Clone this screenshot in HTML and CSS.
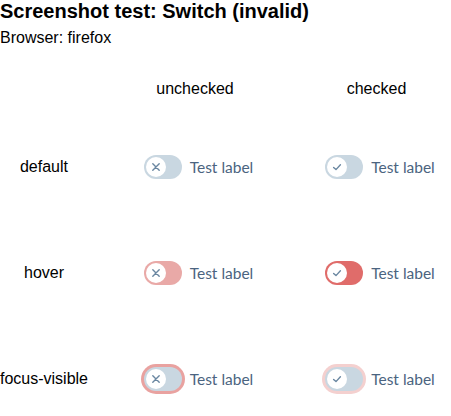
FILE: index.html
```html
<!DOCTYPE html>
<html>
<head>
<meta charset="utf-8">
<link rel="stylesheet" href="styles.css">
</head>
<body>
<h1 class="title">Screenshot test: Switch (invalid)</h1>
<p class="browser">Browser: firefox</p>
<div class="grid">
  <div class="cell head"></div>
  <div class="cell head">unchecked</div>
  <div class="cell head">checked</div>

  <div class="cell rowlabel">default</div>
  <div class="cell sw-cell">
    <span class="switch"><span class="track"><span class="thumb"><svg viewBox="0 0 20 20"><path d="M6.8 6.8 L13.2 13.2 M13.2 6.8 L6.8 13.2"/></svg></span></span><span class="label">Test label</span></span>
  </div>
  <div class="cell sw-cell">
    <span class="switch"><span class="track"><span class="thumb"><svg viewBox="0 0 20 20"><path d="M6.6 10.4 L9 12.6 L13.4 7.8"/></svg></span></span><span class="label">Test label</span></span>
  </div>

  <div class="cell rowlabel">hover</div>
  <div class="cell sw-cell">
    <span class="switch"><span class="track hover-off"><span class="thumb"><svg viewBox="0 0 20 20"><path d="M6.8 6.8 L13.2 13.2 M13.2 6.8 L6.8 13.2"/></svg></span></span><span class="label">Test label</span></span>
  </div>
  <div class="cell sw-cell">
    <span class="switch"><span class="track hover-on"><span class="thumb"><svg viewBox="0 0 20 20"><path d="M6.6 10.4 L9 12.6 L13.4 7.8"/></svg></span></span><span class="label">Test label</span></span>
  </div>

  <div class="cell rowlabel">focus-visible</div>
  <div class="cell sw-cell">
    <span class="switch"><span class="track focus-off"><span class="thumb"><svg viewBox="0 0 20 20"><path d="M6.8 6.8 L13.2 13.2 M13.2 6.8 L6.8 13.2"/></svg></span></span><span class="label">Test label</span></span>
  </div>
  <div class="cell sw-cell">
    <span class="switch"><span class="track focus-on"><span class="thumb"><svg viewBox="0 0 20 20"><path d="M6.6 10.4 L9 12.6 L13.4 7.8"/></svg></span></span><span class="label">Test label</span></span>
  </div>
</div>
</body>
</html>
```
FILE: styles.css
```css
html, body {
  margin: 0;
  padding: 0;
  background: #ffffff;
}
body {
  font-family: "Liberation Sans", Arial, sans-serif;
  color: #000000;
}
.title {
  margin: 0;
  font-size: 20px;
  font-weight: bold;
  line-height: 23px;
}
.browser {
  margin: 5px 0 0 0;
  font-size: 16px;
  line-height: 19px;
}
.grid {
  display: grid;
  grid-template-columns: 88px 214px 149px;
  grid-template-rows: 50px 106px 106px 106px;
  margin-top: 17px;
  font-size: 16px;
}
.cell {
  display: flex;
  align-items: center;
  justify-content: center;
  white-space: nowrap;
}
.sw-cell {
  padding-left: 7px;
}
.switch {
  display: inline-flex;
  align-items: center;
  gap: 8px;
}
.track {
  box-sizing: border-box;
  width: 38px;
  height: 24px;
  border-radius: 12px;
  background: #c9d7e1;
  padding: 2px;
  display: flex;
  align-items: center;
}
.thumb {
  width: 20px;
  height: 20px;
  border-radius: 50%;
  background: #ffffff;
  display: flex;
}
.thumb svg {
  width: 20px;
  height: 20px;
  fill: none;
  stroke: #6a87a1;
  stroke-width: 1.4;
  stroke-linecap: round;
  stroke-linejoin: round;
}
.hover-off {
  background: #e9a9a7;
}
.hover-on {
  background: #e06c6a;
}
.focus-off {
  box-shadow: 0 0 0 3px #e9a2a0;
}
.focus-on {
  box-shadow: 0 0 0 3px #f4d0cf;
}
.label {
  font-family: Lato, "Noto Sans", sans-serif;
  font-size: 15.5px;
  color: #4b6480;
}
```
